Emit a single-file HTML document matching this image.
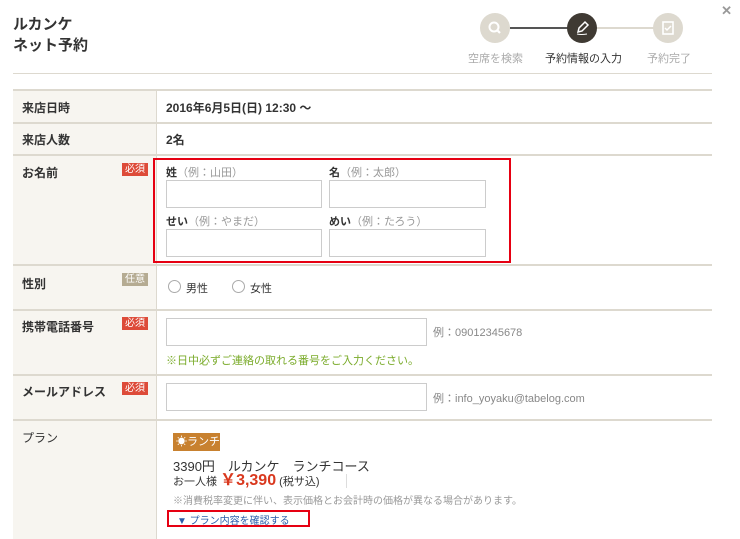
<!DOCTYPE html>
<html><head><meta charset="utf-8"><style>
*{margin:0;padding:0;box-sizing:border-box}
body{width:740px;height:539px;overflow:hidden;background:#fff;font-family:"Liberation Sans","Noto Sans CJK JP",sans-serif;color:#333;position:relative;font-size:12px}
.a{position:absolute}
.title{left:13px;top:14px;font-size:15px;line-height:21px;font-weight:bold;color:#333}
.hl{background:#ddd9cf;height:1px}
.lab{background:#f7f5f0}
.lt{font-size:12px;font-weight:bold;color:#333}
.req{background:#dd4b39;color:#fff;font-size:10px;padding:0 3px;line-height:13px}
.opt{background:#b5ab92;color:#fff;font-size:10px;padding:0 3px;line-height:13px}
.in{border:1px solid #ccc;background:#fff}
.sm{font-size:11px;color:#333;font-weight:bold}
.sm span{color:#999;font-weight:normal}
.circ{width:30px;height:30px;border-radius:50%}
.radio{width:13px;height:13px;border:1px solid #aaa;border-radius:50%;background:#fff}
</style></head><body>
<div class="a title">ルカンケ<br>ネット予約</div>
<div class="a" style="right:8px;top:3px;color:#999;font-size:13px;font-weight:bold">✕</div>
<!-- steps -->
<div class="a" style="left:495px;top:27px;width:173px;height:2px;background:#ddd9cf"></div>
<div class="a" style="left:510px;top:27px;width:60px;height:2px;background:#555"></div>
<div class="a circ" style="left:480px;top:13px;background:#ddd9cf"><svg width="30" height="30"><circle cx="14" cy="14" r="4.5" fill="none" stroke="#fff" stroke-width="2"/><line x1="17" y1="17" x2="20" y2="20" stroke="#fff" stroke-width="2.2"/></svg></div>
<div class="a circ" style="left:567px;top:13px;background:#3f3a33"><svg width="30" height="30"><path d="M11 19 L12 15 L18 9 L21 12 L15 18 Z" fill="none" stroke="#fff" stroke-width="1.5"/><path d="M10 21 Q14 22 20 21" stroke="#fff" fill="none" stroke-width="1"/></svg></div>
<div class="a circ" style="left:653px;top:13px;background:#ddd9cf"><svg width="30" height="30"><rect x="10" y="9" width="10" height="12" fill="none" stroke="#fff" stroke-width="1.6"/><path d="M12 15 L14 17 L18 13" stroke="#fff" fill="none" stroke-width="1.5"/></svg></div>
<div class="a" style="left:468px;top:50px;font-size:11px;color:#aaa">空席を検索</div>
<div class="a" style="left:545px;top:50px;font-size:11px;color:#333">予約情報の入力</div>
<div class="a" style="left:647px;top:50px;font-size:11px;color:#aaa">予約完了</div>
<div class="a hl" style="left:13px;top:73px;width:699px"></div>
<!-- table -->
<div class="a lab" style="left:13px;top:90px;width:143px;height:449px"></div>
<div class="a" style="left:156px;top:90px;width:1px;height:449px;background:#ddd9cf"></div>
<div class="a" style="left:13px;top:89px;width:699px;height:2px;background:#ddd9cf"></div>
<div class="a" style="left:13px;top:122px;width:699px;height:2px;background:#ddd9cf"></div>
<div class="a" style="left:13px;top:154px;width:699px;height:2px;background:#ddd9cf"></div>
<div class="a" style="left:13px;top:264px;width:699px;height:2px;background:#ddd9cf"></div>
<div class="a" style="left:13px;top:309px;width:699px;height:2px;background:#ddd9cf"></div>
<div class="a" style="left:13px;top:374px;width:699px;height:2px;background:#ddd9cf"></div>
<div class="a" style="left:13px;top:419px;width:699px;height:2px;background:#ddd9cf"></div>

<div class="a lt" style="left:22px;top:99px">来店日時</div>
<div class="a lt" style="left:166px;top:99px">2016年6月5日(日) 12:30 ～</div>
<div class="a lt" style="left:22px;top:131px">来店人数</div>
<div class="a lt" style="left:166px;top:131px">2名</div>
<div class="a lt" style="left:22px;top:164px">お名前</div><div class="a req" style="left:122px;top:163px">必須</div>
<div class="a lt" style="left:22px;top:275px">性別</div><div class="a opt" style="left:122px;top:273px">任意</div>
<div class="a lt" style="left:22px;top:318px">携帯電話番号</div><div class="a req" style="left:122px;top:317px">必須</div>
<div class="a lt" style="left:22px;top:383px">メールアドレス</div><div class="a req" style="left:122px;top:382px">必須</div>
<div class="a" style="left:22px;top:429px;font-size:12px">プラン</div>

<div class="a" style="left:153px;top:158px;width:358px;height:105px;border:2px solid #e60012"></div>
<div class="a sm" style="left:166px;top:164px">姓<span>（例：山田）</span></div>
<div class="a sm" style="left:329px;top:164px">名<span>（例：太郎）</span></div>
<div class="a in" style="left:166px;top:180px;width:156px;height:28px"></div>
<div class="a in" style="left:329px;top:180px;width:157px;height:28px"></div>
<div class="a sm" style="left:166px;top:213px">せい<span>（例：やまだ）</span></div>
<div class="a sm" style="left:329px;top:213px">めい<span>（例：たろう）</span></div>
<div class="a in" style="left:166px;top:229px;width:156px;height:28px"></div>
<div class="a in" style="left:329px;top:229px;width:157px;height:28px"></div>

<div class="a radio" style="left:168px;top:280px"></div><div class="a" style="left:186px;top:280px;font-size:11px">男性</div>
<div class="a radio" style="left:232px;top:280px"></div><div class="a" style="left:250px;top:280px;font-size:11px">女性</div>

<div class="a in" style="left:166px;top:318px;width:261px;height:28px"></div>
<div class="a" style="left:433px;top:324px;font-size:11px;color:#888">例：09012345678</div>
<div class="a" style="left:166px;top:352px;font-size:11px;color:#7aab2a">※日中必ずご連絡の取れる番号をご入力ください。</div>
<div class="a in" style="left:166px;top:383px;width:261px;height:28px"></div>
<div class="a" style="left:433px;top:390px;font-size:11px;color:#888">例：info_yoyaku@tabelog.com</div>

<div class="a" style="left:173px;top:433px;width:47px;height:18px;background:#c8812f;color:#fff;font-size:11px;line-height:18px;padding-left:3px">☀ランチ</div>
<div class="a" style="left:173px;top:456px;font-size:13px;color:#333">3390円　ルカンケ　ランチコース</div>
<div class="a" style="left:173px;top:472px;font-size:11px;color:#333;line-height:18px">お一人様 <span style="color:#d9381e;font-size:16px;font-weight:bold">￥3,390</span> (税サ込)</div>
<div class="a" style="left:346px;top:474px;width:1px;height:14px;background:#ddd"></div>
<div class="a" style="left:173px;top:492px;font-size:10px;color:#999">※消費税率変更に伴い、表示価格とお会計時の価格が異なる場合があります。</div>
<div class="a" style="left:167px;top:510px;width:143px;height:17px;border:2px solid #e60012"></div>
<div class="a" style="left:177px;top:512px;font-size:10px;color:#2a5caa">▼ プラン内容を確認する</div>
</body></html>
